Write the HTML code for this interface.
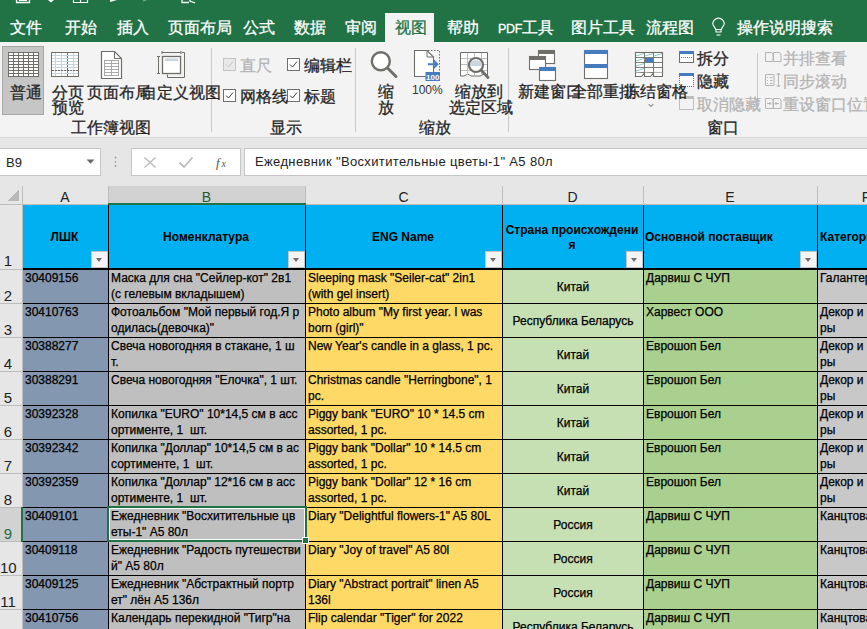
<!DOCTYPE html><html><head><meta charset="utf-8"><style>
*{margin:0;padding:0}
html,body{width:867px;height:629px;overflow:hidden;background:#fff}
body{position:relative;font-family:"Liberation Sans",sans-serif}
body>div{position:absolute;white-space:nowrap}
.zh{font-size:16px;line-height:16px;-webkit-text-stroke:0.3px}
.c{font-size:12px;line-height:16px;color:#000;-webkit-text-stroke:0.25px #000;white-space:nowrap;overflow:visible}
.dd{width:17px;height:17px;box-sizing:border-box;border:1px solid #c4c4c4;background:#f4f4f4}
.dd:after{content:"";position:absolute;left:4px;top:6px;border-left:3.8px solid transparent;border-right:3.8px solid transparent;border-top:4.5px solid #6e6e6e}
</style></head><body><div style="left:0px;top:0px;width:867px;height:42px;background:#217346"></div><div style="left:385px;top:13px;width:49px;height:29px;background:#f3f3f3"></div><div class="zh" style="left:10px;top:20px;color:#fff">文件</div><div class="zh" style="left:65px;top:20px;color:#fff">开始</div><div class="zh" style="left:117px;top:20px;color:#fff">插入</div><div class="zh" style="left:168px;top:20px;color:#fff">页面布局</div><div class="zh" style="left:243px;top:20px;color:#fff">公式</div><div class="zh" style="left:294px;top:20px;color:#fff">数据</div><div class="zh" style="left:345px;top:20px;color:#fff">审阅</div><div class="zh" style="left:395px;top:20px;color:#217346">视图</div><div class="zh" style="left:447px;top:20px;color:#fff">帮助</div><div class="zh" style="left:498px;top:20px;color:#fff"><span style="font-size:12.5px;letter-spacing:-0.3px">PDF</span>工具</div><div class="zh" style="left:571px;top:20px;color:#fff">图片工具</div><div class="zh" style="left:646px;top:20px;color:#fff">流程图</div><div class="zh" style="left:737px;top:20px;color:#fff">操作说明搜索</div><svg style="position:absolute;left:0;top:0" width="867" height="42" viewBox="0 0 867 42"><path d="M16.5 -3 V2.5 H29.5 V-3" fill="none" stroke="#fff" stroke-width="1.3"/><rect x="19" y="-1" width="8" height="2" fill="#fff"/><path d="M48 0 H54 L51 2.5 Z" fill="#fff"/><path d="M73.5 -3 V2.5 H87.5 V-3 M80.5 -3 V2.5" fill="none" stroke="#fff" stroke-width="1.2"/><path d="M110 -2 L117 0 L110 2 Z" fill="#fff"/><path d="M143 1 L148 -1" stroke="#7fae92" stroke-width="1.2"/><path d="M182 -3 V2.5 H189 M186 -3 A4 4 0 0 1 190 1 L195 3" fill="none" stroke="#fff" stroke-width="1.3"/><path d="M716 32 V30.5 C716 28 712.8 26 712.8 23.8 A5.7 5.7 0 0 1 724.2 23.8 C724.2 26 721 28 721 30.5 V32 Z" fill="none" stroke="#fff" stroke-width="1.1"/><line x1="716" y1="29.5" x2="721" y2="29.5" stroke="#fff"/><line x1="716.5" y1="35" x2="720.5" y2="35" stroke="#fff" stroke-width="1.1"/></svg><div style="left:0px;top:42px;width:867px;height:95px;background:#f3f3f3"></div><div style="left:0px;top:137px;width:867px;height:1px;background:#d6d6d6"></div><div style="left:2px;top:46px;width:42px;height:69px;background:#c6c6c6;border:1px solid #a6a6a6;box-sizing:border-box"></div><svg style="position:absolute;left:0;top:0" width="867" height="140" viewBox="0 0 867 140"><rect x="8.5" y="52.5" width="30" height="24" fill="#fff" stroke="#6f6e69"/><line x1="13.5" y1="52.5" x2="13.5" y2="76.5" stroke="#6f6e69"/><line x1="18.5" y1="52.5" x2="18.5" y2="76.5" stroke="#6f6e69"/><line x1="23.5" y1="52.5" x2="23.5" y2="76.5" stroke="#6f6e69"/><line x1="28.5" y1="52.5" x2="28.5" y2="76.5" stroke="#6f6e69"/><line x1="33.5" y1="52.5" x2="33.5" y2="76.5" stroke="#6f6e69"/><line x1="8.5" y1="55.5" x2="38.5" y2="55.5" stroke="#6f6e69"/><line x1="8.5" y1="58.5" x2="38.5" y2="58.5" stroke="#6f6e69"/><line x1="8.5" y1="61.5" x2="38.5" y2="61.5" stroke="#6f6e69"/><line x1="8.5" y1="64.5" x2="38.5" y2="64.5" stroke="#6f6e69"/><line x1="8.5" y1="67.5" x2="38.5" y2="67.5" stroke="#6f6e69"/><line x1="8.5" y1="70.5" x2="38.5" y2="70.5" stroke="#6f6e69"/><line x1="8.5" y1="73.5" x2="38.5" y2="73.5" stroke="#6f6e69"/><rect x="51.5" y="52.5" width="27" height="24" fill="#fff" stroke="none"/><line x1="55.5" y1="53" x2="55.5" y2="76" stroke="#c5d5dd"/><line x1="61.5" y1="53" x2="61.5" y2="76" stroke="#c5d5dd"/><line x1="73.5" y1="53" x2="73.5" y2="76" stroke="#c5d5dd"/><line x1="52" y1="55.5" x2="78" y2="55.5" stroke="#c5d5dd"/><line x1="52" y1="58.5" x2="78" y2="58.5" stroke="#c5d5dd"/><line x1="52" y1="61.5" x2="78" y2="61.5" stroke="#c5d5dd"/><line x1="52" y1="64.5" x2="78" y2="64.5" stroke="#c5d5dd"/><line x1="52" y1="67.5" x2="78" y2="67.5" stroke="#c5d5dd"/><line x1="52" y1="70.5" x2="78" y2="70.5" stroke="#c5d5dd"/><line x1="52" y1="73.5" x2="78" y2="73.5" stroke="#c5d5dd"/><line x1="67.5" y1="53" x2="67.5" y2="76" stroke="#6f6e69" stroke-dasharray="2,1"/><line x1="52" y1="70.5" x2="78" y2="70.5" stroke="#6f6e69" stroke-dasharray="2,1"/><rect x="51.5" y="52.5" width="27" height="24" fill="none" stroke="#6f6e69"/><path d="M101.5 51.5 H114.5 L121.5 58.5 V78.5 H101.5 Z" fill="#fff" stroke="#6f6e69" stroke-width="1.2"/><path d="M114.5 51.5 V58.5 H121.5" fill="none" stroke="#6f6e69"/><rect x="104.5" y="60.5" width="14" height="15" fill="#fff" stroke="#a9a9a9"/><line x1="104.5" y1="63.5" x2="118.5" y2="63.5" stroke="#a9a9a9"/><line x1="104.5" y1="66.5" x2="118.5" y2="66.5" stroke="#a9a9a9"/><line x1="104.5" y1="69.5" x2="118.5" y2="69.5" stroke="#a9a9a9"/><line x1="104.5" y1="72.5" x2="118.5" y2="72.5" stroke="#a9a9a9"/><line x1="111.5" y1="60.5" x2="111.5" y2="75.5" stroke="#a9a9a9"/><rect x="162.5" y="56.5" width="18" height="17" fill="#fff" stroke="#6f6e69" stroke-width="1.3"/><rect x="165" y="58.5" width="13" height="2.5" fill="#c7d5dc"/><path d="M162 52.5 H181 M162 51 V54 M181 51 V54 M158.5 56 V74 M157 56.5 H160 M157 73.5 H160" fill="none" stroke="#6f6e69"/><path d="M182 52.5 H184.5 V77.5 H167.5 V74.5" fill="none" stroke="#6f6e69"/><line x1="211.5" y1="48" x2="211.5" y2="132" stroke="#c8c8c8"/><line x1="355.5" y1="48" x2="355.5" y2="132" stroke="#c8c8c8"/><line x1="508.5" y1="48" x2="508.5" y2="132" stroke="#c8c8c8"/><line x1="757.5" y1="53" x2="757.5" y2="108" stroke="#c8c8c8"/><rect x="223.5" y="58.5" width="12" height="12" fill="#e9e9e9" stroke="#c3c3c3"/><path d="M226 64.5 L228.5 67 L233 61.5" fill="none" stroke="#c3c3c3" stroke-width="1"/><rect x="287.5" y="58.5" width="12" height="12" fill="#fff" stroke="#6f6e69"/><path d="M290 64.5 L292.5 67 L297 61.5" fill="none" stroke="#444" stroke-width="1"/><rect x="223.5" y="89.5" width="12" height="12" fill="#fff" stroke="#6f6e69"/><path d="M226 95.5 L228.5 98 L233 92.5" fill="none" stroke="#444" stroke-width="1"/><rect x="287.5" y="89.5" width="12" height="12" fill="#fff" stroke="#6f6e69"/><path d="M290 95.5 L292.5 98 L297 92.5" fill="none" stroke="#444" stroke-width="1"/><circle cx="380.8" cy="61.3" r="9" fill="#fff" stroke="#6f6e69" stroke-width="2.4"/><line x1="388" y1="68.5" x2="396" y2="76.5" stroke="#6f6e69" stroke-width="3" stroke-linecap="round"/><path d="M414.5 50.5 H427 L433.5 57 V76.5 H414.5 Z" fill="#fff" stroke="#6f6e69" stroke-width="1.1"/><path d="M427 50.5 V57 H433.5" fill="none" stroke="#6f6e69"/><path d="M428 50.5 H439.5 V72" fill="none" stroke="#6f6e69" stroke-dasharray="1.5,1.5"/><path d="M428 64.3 H437 M433.5 60.5 L437.3 64.3 L433.5 68" fill="none" stroke="#467bbd" stroke-width="2"/><rect x="425.5" y="72" width="14.5" height="9" fill="#467bbd"/><text x="432.7" y="79.6" font-family="Liberation Sans" font-size="8" font-weight="bold" fill="#fff" text-anchor="middle">100</text><path d="M460.5 52.5 H487.5 V76 L484 74 L480 76 H471 L468 74 L464 76 H460.5 Z" fill="#fff" stroke="#6f6e69" stroke-width="1"/><line x1="467.5" y1="53" x2="467.5" y2="75" stroke="#bdbdbd"/><line x1="474.5" y1="53" x2="474.5" y2="75" stroke="#bdbdbd"/><line x1="481.5" y1="53" x2="481.5" y2="75" stroke="#bdbdbd"/><line x1="461" y1="58.5" x2="487" y2="58.5" stroke="#bdbdbd"/><line x1="461" y1="64.5" x2="487" y2="64.5" stroke="#bdbdbd"/><line x1="461" y1="70.5" x2="487" y2="70.5" stroke="#bdbdbd"/><circle cx="476" cy="65" r="7" fill="#fff" stroke="#6f6e69" stroke-width="2.2"/><path d="M470 66 A6 6 0 0 1 482 66 Z" fill="#c9d6de"/><line x1="481" y1="70" x2="488" y2="77.5" stroke="#6f6e69" stroke-width="2.8" stroke-linecap="round"/><rect x="538.5" y="50.5" width="16" height="13" fill="#fff" stroke="#6f6e69" stroke-width="1.1"/><rect x="538" y="50" width="17" height="4" fill="#6f6e69"/><rect x="529.5" y="56.5" width="16" height="13" fill="#fff" stroke="#6f6e69" stroke-width="1.1"/><rect x="529" y="56" width="17" height="4" fill="#6f6e69"/><rect x="539.5" y="67.5" width="16" height="13" fill="#fff" stroke="#6f6e69" stroke-width="1.1"/><rect x="539" y="67" width="17" height="4" fill="#467bbd"/><rect x="584.5" y="50.5" width="23" height="28" fill="#fff" stroke="#6f6e69" stroke-width="1.1"/><rect x="584" y="50" width="24" height="4" fill="#467bbd"/><rect x="584" y="64" width="24" height="4" fill="#467bbd"/><rect x="635.5" y="52.5" width="27" height="20" fill="#fff" stroke="#6f6e69" stroke-width="1.1"/><path d="M635.5 72.5 V76.5 H641.5 L644.5 73 M644.5 72.5 V76.5 H650.5 L653.5 73 M653.5 72.5 V76.5 H662.5 V72.5" fill="#fff" stroke="#6f6e69" stroke-width="1.1"/><path d="M644.5 52.5 V72.5 M653.5 52.5 V72.5 M635.5 57.5 H662.5 M635.5 62.5 H662.5 M635.5 67.5 H662.5" fill="none" stroke="#6f6e69" stroke-width="0.9"/><path d="M636 56 L644 53.5 M645 56 L653 53.5 M654 56 L662 53.5 M636 61 L644 58.5 M636 66 L644 63.5 M636 71 L644 68.5" fill="none" stroke="#8fc5c6" stroke-width="1"/><rect x="645" y="58" width="8" height="4.5" fill="#467bbd"/><path d="M648.8 104.2 L651 106.5 L653.2 104.2" fill="none" stroke="#555" stroke-width="1"/><rect x="679.5" y="51.5" width="14" height="11" fill="#fff" stroke="#6f6e69"/><rect x="679" y="51" width="15" height="3" fill="#467bbd"/><line x1="681" y1="57.5" x2="692" y2="57.5" stroke="#467bbd" stroke-dasharray="1,1"/><rect x="680" y="74" width="13" height="12" fill="#fff"/><path d="M679.5 74 V87 M693.5 74 V87 M679 86.5 H694" fill="none" stroke="#6f6e69" stroke-dasharray="1,1"/><rect x="679" y="73" width="15" height="3" fill="#467bbd"/><rect x="679.5" y="96.5" width="14" height="13" fill="none" stroke="#bdbdbd"/><rect x="679" y="96" width="15" height="3" fill="#bdbdbd"/><path d="M765.5 52.5 H771.5 L773 54 V61.5 H765.5 Z M773.5 52.5 H779.5 L781 54 V61.5 H773.5 Z" fill="none" stroke="#b4b4b4"/><path d="M765.5 74.5 H774 V85.5 H765.5 Z M767 77.5 H768 M770 77.5 H772.5 M767 80.5 H768 M770 80.5 H772.5 M767 83.5 H768 M770 83.5 H772.5 M778.5 73 V87 M776.5 75 L778.5 73 L780.5 75 M776.5 85 L778.5 87 L780.5 85" fill="none" stroke="#b4b4b4"/><path d="M765.5 98.5 H771.5 L773 100 V108.5 H765.5 Z M773.5 98.5 H779.5 L781 100 V108.5 H773.5 Z M767 103.5 H771 M769.5 102 L771 103.5 L769.5 105 M775 103.5 H779 M776.5 102 L775 103.5 L776.5 105" fill="none" stroke="#b4b4b4"/></svg><div class="zh" style="left:10px;top:85px;color:#262626">普通</div><div class="zh" style="left:52px;top:85px;color:#262626">分页</div><div class="zh" style="left:52px;top:100px;color:#262626">预览</div><div class="zh" style="left:87px;top:85px;color:#262626">页面布局</div><div class="zh" style="left:141px;top:85px;color:#262626">自定义视图</div><div class="zh" style="left:71px;top:120px;color:#262626">工作簿视图</div><div class="zh" style="left:240px;top:58px;color:#b3b3b3">直尺</div><div class="zh" style="left:304px;top:58px;color:#262626">编辑栏</div><div class="zh" style="left:240px;top:89px;color:#262626">网格线</div><div class="zh" style="left:304px;top:89px;color:#262626">标题</div><div class="zh" style="left:270px;top:120px;color:#262626">显示</div><div class="zh" style="left:378px;top:84px;color:#262626">缩</div><div class="zh" style="left:378px;top:100px;color:#262626">放</div><div style="left:412px;top:83px;font-size:12px;color:#333">100%</div><div class="zh" style="left:455px;top:84px;color:#262626">缩放到</div><div class="zh" style="left:449px;top:100px;color:#262626">选定区域</div><div class="zh" style="left:419px;top:120px;color:#262626">缩放</div><div class="zh" style="left:518px;top:84px;color:#262626">新建窗口</div><div class="zh" style="left:571px;top:84px;color:#262626">全部重排</div><div class="zh" style="left:624px;top:84px;color:#262626">冻结窗格</div><div class="zh" style="left:697px;top:51px;color:#262626">拆分</div><div class="zh" style="left:697px;top:74px;color:#262626">隐藏</div><div class="zh" style="left:697px;top:97px;color:#b3b3b3">取消隐藏</div><div class="zh" style="left:707px;top:120px;color:#262626">窗口</div><div class="zh" style="left:783px;top:51px;color:#b3b3b3">并排查看</div><div class="zh" style="left:783px;top:74px;color:#b3b3b3">同步滚动</div><div class="zh" style="left:783px;top:97px;color:#b3b3b3">重设窗口位置</div><div style="left:0px;top:138px;width:867px;height:48px;background:#e6e6e6"></div><div style="left:-1px;top:148px;width:102px;height:28px;background:#fff;border:1px solid #c6c6c6;box-sizing:border-box"></div><div style="left:131px;top:148px;width:110px;height:28px;background:#fff;border:1px solid #c6c6c6;box-sizing:border-box"></div><div style="left:244px;top:148px;width:640px;height:28px;background:#fff;border:1px solid #c6c6c6;box-sizing:border-box"></div><div style="left:6px;top:155px;font-size:13px;color:#222">B9</div><svg style="position:absolute;left:0;top:140px" width="260" height="40" viewBox="0 140 260 40"><path d="M86.5 159.5 H94.5 L90.5 163.8 Z" fill="#6a6a6a"/><circle cx="115.5" cy="157.5" r="0.9" fill="#9a9a9a"/><circle cx="115.5" cy="161.8" r="0.9" fill="#9a9a9a"/><circle cx="115.5" cy="166" r="0.9" fill="#9a9a9a"/><path d="M144.5 157.5 L155.5 167.5 M155.5 157.5 L144.5 167.5" stroke="#bcbcbc" stroke-width="1.5"/><path d="M179.5 162.5 L184 167 L192.5 157.5" fill="none" stroke="#bcbcbc" stroke-width="1.8"/><text x="216" y="166.5" font-family="Liberation Serif" font-style="italic" font-size="13" fill="#555">f</text><text x="221.5" y="167" font-family="Liberation Serif" font-style="italic" font-size="10" fill="#555">x</text></svg><div style="left:255px;top:154px;font-size:13px;letter-spacing:0.36px;color:#222">Ежедневник "Восхитительные цветы-1" А5 80л</div><div style="left:0px;top:186px;width:867px;height:18px;background:#e6e6e6"></div><div style="left:22px;top:186px;width:1px;height:19px;background:#bdbdbd"></div><div style="left:22px;top:189px;width:86px;text-align:center;font-size:14px;color:#222">A</div><div style="left:109px;top:186px;width:196px;height:17px;background:#d2d2d2"></div><div style="left:108px;top:186px;width:1px;height:19px;background:#bdbdbd"></div><div style="left:108px;top:189px;width:197px;text-align:center;font-size:14px;color:#1e5a36">B</div><div style="left:305px;top:186px;width:1px;height:19px;background:#bdbdbd"></div><div style="left:305px;top:189px;width:197px;text-align:center;font-size:14px;color:#222">C</div><div style="left:502px;top:186px;width:1px;height:19px;background:#bdbdbd"></div><div style="left:502px;top:189px;width:141px;text-align:center;font-size:14px;color:#222">D</div><div style="left:643px;top:186px;width:1px;height:19px;background:#bdbdbd"></div><div style="left:643px;top:189px;width:174px;text-align:center;font-size:14px;color:#222">E</div><div style="left:817px;top:186px;width:1px;height:19px;background:#bdbdbd"></div><div style="left:817px;top:189px;width:98px;text-align:center;font-size:14px;color:#222">F</div><div style="left:0px;top:204px;width:867px;height:1px;background:#bdbdbd"></div><div style="left:108px;top:203px;width:198px;height:2px;background:#217346"></div><div style="left:8px;top:190px;width:11px;height:11px;background:linear-gradient(to bottom right,transparent 50%,#b8b8b8 50%)"></div><div style="left:0px;top:205px;width:22px;height:424px;background:#e6e6e6"></div><div style="left:22px;top:205px;width:1px;height:424px;background:#bdbdbd"></div><div style="left:0px;top:508px;width:21px;height:33px;background:#d2d2d2"></div><div style="left:23px;top:205px;width:844px;height:63px;background:#00b0f0"></div><div style="left:23px;top:268px;width:844px;height:2px;background:#000"></div><div style="left:23px;top:270px;width:85px;height:359px;background:#8497b0"></div><div style="left:109px;top:270px;width:196px;height:359px;background:#bfbfbf"></div><div style="left:306px;top:270px;width:196px;height:359px;background:#ffd966"></div><div style="left:503px;top:270px;width:140px;height:359px;background:#c6e0b4"></div><div style="left:644px;top:270px;width:173px;height:359px;background:#a9d08e"></div><div style="left:818px;top:270px;width:97px;height:359px;background:#c8c8c8"></div><div style="left:108px;top:205px;width:1px;height:424px;background:#000"></div><div style="left:305px;top:205px;width:1px;height:424px;background:#000"></div><div style="left:502px;top:205px;width:1px;height:424px;background:#000"></div><div style="left:643px;top:205px;width:1px;height:424px;background:#000"></div><div style="left:817px;top:205px;width:1px;height:424px;background:#000"></div><div style="left:23px;top:303px;width:844px;height:1px;background:#000"></div><div style="left:23px;top:337px;width:844px;height:1px;background:#000"></div><div style="left:23px;top:371px;width:844px;height:1px;background:#000"></div><div style="left:23px;top:405px;width:844px;height:1px;background:#000"></div><div style="left:23px;top:439px;width:844px;height:1px;background:#000"></div><div style="left:23px;top:473px;width:844px;height:1px;background:#000"></div><div style="left:23px;top:507px;width:844px;height:1px;background:#000"></div><div style="left:23px;top:541px;width:844px;height:1px;background:#000"></div><div style="left:23px;top:575px;width:844px;height:1px;background:#000"></div><div style="left:23px;top:609px;width:844px;height:1px;background:#000"></div><div style="left:23px;top:643px;width:844px;height:1px;background:#000"></div><div style="left:0px;top:269px;width:22px;height:1px;background:#bdbdbd"></div><div style="left:0px;top:303px;width:22px;height:1px;background:#bdbdbd"></div><div style="left:0px;top:337px;width:22px;height:1px;background:#bdbdbd"></div><div style="left:0px;top:371px;width:22px;height:1px;background:#bdbdbd"></div><div style="left:0px;top:405px;width:22px;height:1px;background:#bdbdbd"></div><div style="left:0px;top:439px;width:22px;height:1px;background:#bdbdbd"></div><div style="left:0px;top:473px;width:22px;height:1px;background:#bdbdbd"></div><div style="left:0px;top:507px;width:22px;height:1px;background:#bdbdbd"></div><div style="left:0px;top:541px;width:22px;height:1px;background:#bdbdbd"></div><div style="left:0px;top:575px;width:22px;height:1px;background:#bdbdbd"></div><div style="left:0px;top:609px;width:22px;height:1px;background:#bdbdbd"></div><div style="left:0px;top:643px;width:22px;height:1px;background:#bdbdbd"></div><div style="left:0;top:252px;width:16px;text-align:center;font-size:15px;color:#222">1</div><div style="left:0;top:287px;width:16px;text-align:center;font-size:15px;color:#222">2</div><div style="left:0;top:321px;width:16px;text-align:center;font-size:15px;color:#222">3</div><div style="left:0;top:355px;width:16px;text-align:center;font-size:15px;color:#222">4</div><div style="left:0;top:389px;width:16px;text-align:center;font-size:15px;color:#222">5</div><div style="left:0;top:423px;width:16px;text-align:center;font-size:15px;color:#222">6</div><div style="left:0;top:457px;width:16px;text-align:center;font-size:15px;color:#222">7</div><div style="left:0;top:491px;width:16px;text-align:center;font-size:15px;color:#222">8</div><div style="left:0;top:525px;width:16px;text-align:center;font-size:15px;color:#1e6b40">9</div><div style="left:0;top:559px;width:16px;text-align:center;font-size:15px;color:#222">10</div><div style="left:0;top:593px;width:16px;text-align:center;font-size:15px;color:#222">11</div><div style="left:0;top:627px;width:16px;text-align:center;font-size:15px;color:#222">12</div><div style="left:23px;top:230px;width:83px;text-align:center;font-size:12px;font-weight:bold;line-height:15px;color:#000">ЛШК</div><div style="left:109px;top:230px;width:194px;text-align:center;font-size:12px;font-weight:bold;line-height:15px;color:#000">Номенклатура</div><div style="left:306px;top:230px;width:194px;text-align:center;font-size:12px;font-weight:bold;line-height:15px;color:#000">ENG Name</div><div style="left:503px;top:223px;width:138px;text-align:center;font-size:12px;font-weight:bold;line-height:15px;color:#000">Страна происхождени<br>я</div><div style="left:645px;top:230px;width:171px;text-align:left;font-size:12px;font-weight:bold;line-height:15px;color:#000">Основной поставщик</div><div style="left:820px;top:230px;font-size:12px;font-weight:bold;color:#000;white-space:nowrap">Категории</div><div class="dd" style="left:91px;top:251px"></div><div class="dd" style="left:288px;top:251px"></div><div class="dd" style="left:485px;top:251px"></div><div class="dd" style="left:626px;top:251px"></div><div class="dd" style="left:800px;top:251px"></div><div class="c" style="left:25px;top:270px">30409156</div><div class="c" style="left:111px;top:270px">Маска для сна "Сейлер-кот" 2в1<br>(с гелевым вкладышем)</div><div class="c" style="left:308px;top:270px">Sleeping mask "Seiler-cat" 2in1<br>(with gel insert)</div><div class="c" style="left:503px;top:279px;width:140px;text-align:center">Китай</div><div class="c" style="left:646px;top:270px">Дарвиш С ЧУП</div><div class="c" style="left:820px;top:270px">Галантерея</div><div class="c" style="left:25px;top:304px">30410763</div><div class="c" style="left:111px;top:304px">Фотоальбом "Мой первый год.Я р<br>одилась(девочка)"</div><div class="c" style="left:308px;top:304px">Photo album "My first year. I was<br>born (girl)"</div><div class="c" style="left:503px;top:313px;width:140px;text-align:center">Республика Беларусь</div><div class="c" style="left:646px;top:304px">Харвест ООО</div><div class="c" style="left:820px;top:304px">Декор и<br>ры</div><div class="c" style="left:25px;top:338px">30388277</div><div class="c" style="left:111px;top:338px">Свеча новогодняя в стакане, 1 ш<br>т.</div><div class="c" style="left:308px;top:338px">New Year's candle in a glass, 1 pc.</div><div class="c" style="left:503px;top:347px;width:140px;text-align:center">Китай</div><div class="c" style="left:646px;top:338px">Еврошоп Бел</div><div class="c" style="left:820px;top:338px">Декор и<br>ры</div><div class="c" style="left:25px;top:372px">30388291</div><div class="c" style="left:111px;top:372px">Свеча новогодняя "Елочка", 1 шт.</div><div class="c" style="left:308px;top:372px">Christmas candle "Herringbone", 1<br>pc.</div><div class="c" style="left:503px;top:381px;width:140px;text-align:center">Китай</div><div class="c" style="left:646px;top:372px">Еврошоп Бел</div><div class="c" style="left:820px;top:372px">Декор и<br>ры</div><div class="c" style="left:25px;top:406px">30392328</div><div class="c" style="left:111px;top:406px">Копилка "EURO" 10*14,5 см в асс<br>ортименте, 1&nbsp; шт.</div><div class="c" style="left:308px;top:406px">Piggy bank "EURO" 10 * 14.5 cm<br>assorted, 1 pc.</div><div class="c" style="left:503px;top:415px;width:140px;text-align:center">Китай</div><div class="c" style="left:646px;top:406px">Еврошоп Бел</div><div class="c" style="left:820px;top:406px">Декор и<br>ры</div><div class="c" style="left:25px;top:440px">30392342</div><div class="c" style="left:111px;top:440px">Копилка "Доллар" 10*14,5 см в ас<br>сортименте, 1&nbsp; шт.</div><div class="c" style="left:308px;top:440px">Piggy bank "Dollar" 10 * 14.5 cm<br>assorted, 1 pc.</div><div class="c" style="left:503px;top:449px;width:140px;text-align:center">Китай</div><div class="c" style="left:646px;top:440px">Еврошоп Бел</div><div class="c" style="left:820px;top:440px">Декор и<br>ры</div><div class="c" style="left:25px;top:474px">30392359</div><div class="c" style="left:111px;top:474px">Копилка "Доллар" 12*16 см в асс<br>ортименте, 1&nbsp; шт.</div><div class="c" style="left:308px;top:474px">Piggy bank "Dollar" 12 * 16 cm<br>assorted, 1 pc.</div><div class="c" style="left:503px;top:483px;width:140px;text-align:center">Китай</div><div class="c" style="left:646px;top:474px">Еврошоп Бел</div><div class="c" style="left:820px;top:474px">Декор и<br>ры</div><div class="c" style="left:25px;top:508px">30409101</div><div class="c" style="left:111px;top:508px">Ежедневник "Восхитительные цв<br>еты-1" А5 80л</div><div class="c" style="left:308px;top:508px">Diary "Delightful flowers-1" A5 80L</div><div class="c" style="left:503px;top:517px;width:140px;text-align:center">Россия</div><div class="c" style="left:646px;top:508px">Дарвиш С ЧУП</div><div class="c" style="left:820px;top:508px">Канцтовары</div><div class="c" style="left:25px;top:542px">30409118</div><div class="c" style="left:111px;top:542px">Ежедневник "Радость путешестви<br>й" А5 80л</div><div class="c" style="left:308px;top:542px">Diary "Joy of travel" A5 80l</div><div class="c" style="left:503px;top:551px;width:140px;text-align:center">Россия</div><div class="c" style="left:646px;top:542px">Дарвиш С ЧУП</div><div class="c" style="left:820px;top:542px">Канцтовары</div><div class="c" style="left:25px;top:576px">30409125</div><div class="c" style="left:111px;top:576px">Ежедневник "Абстрактный портр<br>ет" лён А5 136л</div><div class="c" style="left:308px;top:576px">Diary "Abstract portrait" linen A5<br>136l</div><div class="c" style="left:503px;top:585px;width:140px;text-align:center">Россия</div><div class="c" style="left:646px;top:576px">Дарвиш С ЧУП</div><div class="c" style="left:820px;top:576px">Канцтовары</div><div class="c" style="left:25px;top:610px">30410756</div><div class="c" style="left:111px;top:610px">Календарь перекидной "Тигр"на</div><div class="c" style="left:308px;top:610px">Flip calendar "Tiger" for 2022</div><div class="c" style="left:503px;top:619px;width:140px;text-align:center">Республика Беларусь</div><div class="c" style="left:646px;top:610px">Дарвиш С ЧУП</div><div class="c" style="left:820px;top:610px">Канцтовары</div><div style="left:21px;top:507px;width:2px;height:35px;background:#217346"></div><div style="left:107px;top:506px;width:200px;height:36px;border:2px solid #217346;box-sizing:border-box"></div><div style="left:109px;top:508px;width:196px;height:32px;border:1px solid #fff;box-sizing:border-box"></div><div style="left:303px;top:538px;width:5px;height:5px;background:#217346;outline:1px solid #fff"></div></body></html>
